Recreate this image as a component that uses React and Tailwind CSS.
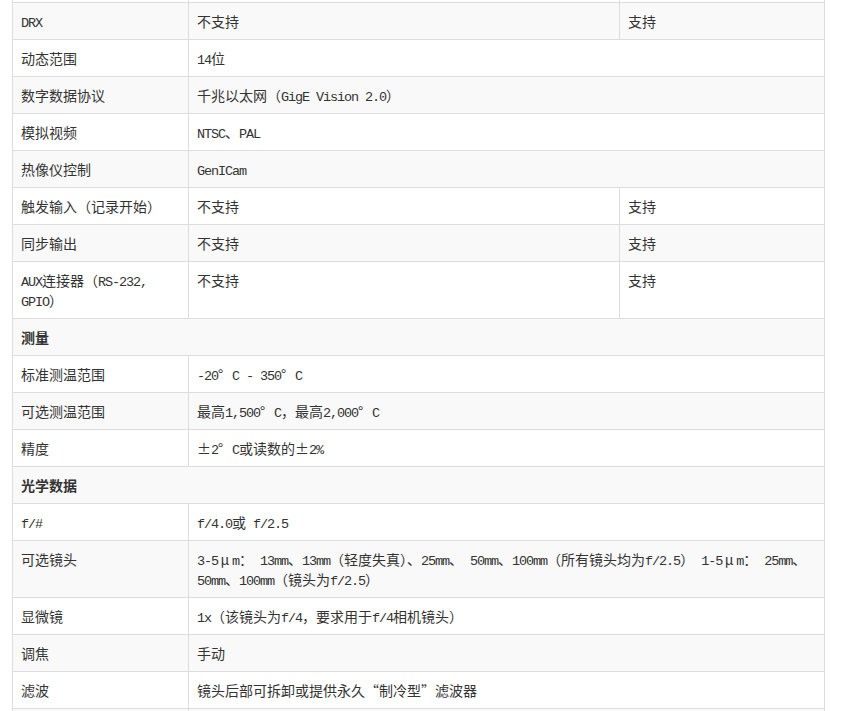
const rows = [
  ["DRX", "不支持", "支持"],
  ["动态范围", "14位"],
  ["数字数据协议", "千兆以太网（GigE Vision 2.0）"],
  ["模拟视频", "NTSC、PAL"],
  ["热像仪控制", "GenICam"],
  ["触发输入（记录开始）", "不支持", "支持"],
  ["同步输出", "不支持", "支持"],
  ["AUX连接器（RS-232,\nGPIO）", "不支持", "支持"],
  { section: "测量" },
  ["标准测温范围", "-20°C - 350°C"],
  ["可选测温范围", "最高1,500°C，最高2,000°C"],
  ["精度", "±2°C或读数的±2%"],
  { section: "光学数据" },
  ["f/#", "f/4.0或 f/2.5"],
  [
    "可选镜头",
    "3-5μm： 13mm、13mm（轻度失真）、25mm、 50mm、100mm（所有镜头均为f/2.5） 1-5μm： 25mm、\n50mm、100mm（镜头为f/2.5）",
  ],
  ["显微镜", "1x（该镜头为f/4，要求用于f/4相机镜头）"],
  ["调焦", "手动"],
  ["滤波", "镜头后部可拆卸或提供永久“制冷型”滤波器"],
];

// SimSun-like look: half-width latin in a mono face, a few symbols full width
function Mixed({ text }) {
  const lines = text.split("\n");
  return lines.map((line, li) => {
    const parts = line.match(/[\x20-\x7e]+|[°±μ“”]|[^\x20-\x7e°±μ“”]+/g) || [];
    return (
      <span key={li}>
        {li > 0 && <br />}
        {parts.map((p, i) => {
          if (/^[\x20-\x7e]+$/.test(p)) {
            return (
              <span
                key={i}
                className="font-['Liberation_Mono',monospace] text-[13.5px] tracking-[-1.1px] leading-[14px]"
              >
                {p}
              </span>
            );
          }
          if (p === "°" || p === "”") {
            return (
              <span key={i} className="inline-block w-[14px] text-left">
                {p}
              </span>
            );
          }
          if (p === "“") {
            return (
              <span key={i} className="inline-block w-[14px] text-right">
                {p}
              </span>
            );
          }
          if (p === "±" || p === "μ") {
            return (
              <span key={i} className="inline-block w-[14px] text-center">
                {p}
              </span>
            );
          }
          return <span key={i}>{p}</span>;
        })}
      </span>
    );
  });
}

const cell = "border-r border-b border-[#dddddd] px-2 py-2";

export default function App() {
  return (
    <div className="bg-white min-h-[711px] pl-[12px] font-['Noto_Sans_CJK_SC',sans-serif] text-[14px] leading-5 text-[#333333]">
      <div className="grid w-[813px] grid-cols-[177px_431px_205px]">
        {/* tail of the row above, cut off by the top edge */}
        <div className="h-[3px] border-l border-r border-b border-[#dddddd] bg-white" />
        <div className="h-[3px] border-r border-b border-[#dddddd] bg-white" />
        <div className="h-[3px] border-r border-b border-[#dddddd] bg-white" />

        {rows.map((r, i) => {
          const bg = i % 2 === 0 ? "bg-[#f9f9f9]" : "bg-white";
          if (r.section) {
            return (
              <div key={i} className={`col-span-3 border-l font-bold ${cell} ${bg}`}>
                {r.section}
              </div>
            );
          }
          return [
            <div key={i + "a"} className={`border-l ${cell} ${bg}`}>
              <Mixed text={r[0]} />
            </div>,
            r.length === 3 ? (
              [
                <div key={i + "b"} className={`${cell} ${bg}`}>
                  <Mixed text={r[1]} />
                </div>,
                <div key={i + "c"} className={`${cell} ${bg}`}>
                  <Mixed text={r[2]} />
                </div>,
              ]
            ) : (
              <div key={i + "b"} className={`col-span-2 ${cell} ${bg}`}>
                <Mixed text={r[1]} />
              </div>
            ),
          ];
        })}

        <div className="h-[36px] border-l border-r border-b border-[#dddddd] bg-[#f9f9f9]" />
        <div className="col-span-2 h-[36px] border-r border-b border-[#dddddd] bg-[#f9f9f9]" />
      </div>
    </div>
  );
}
